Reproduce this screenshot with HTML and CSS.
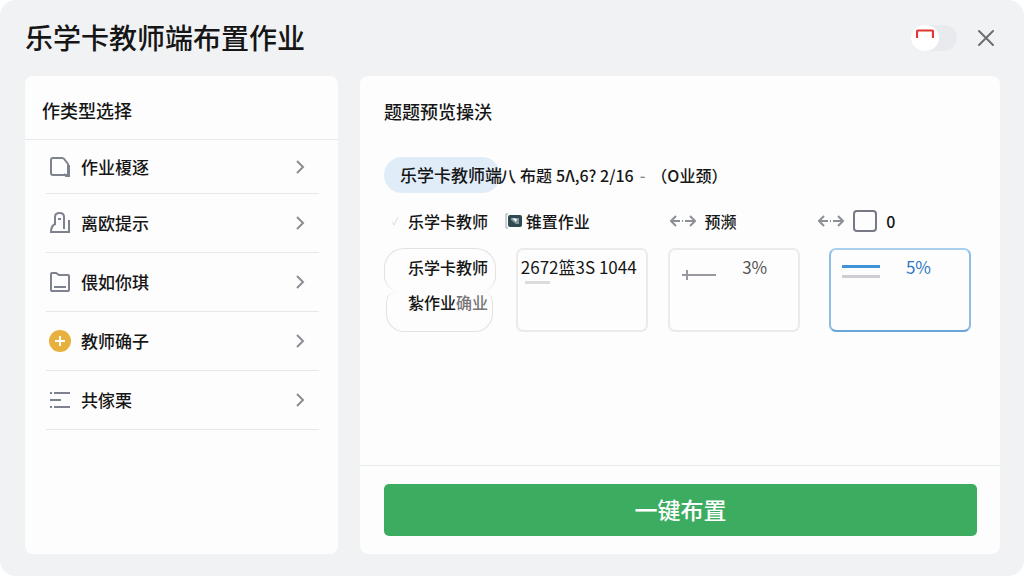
FILE: index.html
```html
<!DOCTYPE html>
<html lang="zh-CN">
<head>
  <meta charset="UTF-8">
  <meta name="viewport" content="width=device-width, initial-scale=1">
  <title>乐学卡教师端布置作业</title>
  <link rel="stylesheet" href="styles.css">
</head>
<body>
  <div class="window">
    <header class="topbar">
      <h1 class="title">乐学卡教师端布置作业</h1>
      <label class="switch">
        <input type="checkbox" aria-label="开关">
        <span class="knob">
          <svg width="18" height="10" viewBox="0 0 18 10"><path d="M1 9V2.5Q1 1.5 2 1.5H16Q17 1.5 17 2.5V9" fill="none" stroke="#e2362f" stroke-width="2.2"/></svg>
        </span>
      </label>
      <button class="close" aria-label="关闭">
        <svg width="18" height="18" viewBox="0 0 18 18"><path d="M2 2L16 16M16 2L2 16" stroke="#6b6e73" stroke-width="2" stroke-linecap="round"/></svg>
      </button>
    </header>

    <div class="content">
      <aside class="panel">
        <h2 class="side-heading">作类型选择</h2>
        <ul class="menu">
          <li>
            <button class="menu-item">
              <svg class="icon" viewBox="0 0 22 22"><path d="M4 2H13Q15 2 16 4L19 8V19H4Q2 19 2 17V4Q2 2 4 2ZM20 9V20H17L15 18"/></svg>
              <span>作业榎逐</span>
              <svg class="arrow" viewBox="0 0 10 16"><path d="M2 2L8 8L2 14"/></svg>
            </button>
          </li>
          <li>
            <button class="menu-item">
              <svg class="icon" viewBox="0 0 22 22"><path d="M6 13V5Q6 1 10.500 1Q15 1 15 5V17M6 12Q2 14 2 20H20V8M9 7H12"/></svg>
              <span>离欧提示</span>
              <svg class="arrow" viewBox="0 0 10 16"><path d="M2 2L8 8L2 14"/></svg>
            </button>
          </li>
          <li>
            <button class="menu-item">
              <svg class="icon" viewBox="0 0 22 22"><path d="M3 2H7L10 4H19Q20 4 20 5V19Q20 20 19 20H3Q2 20 2 19V3Q2 2 3 2ZM5 16H17"/></svg>
              <span>偎如你琪</span>
              <svg class="arrow" viewBox="0 0 10 16"><path d="M2 2L8 8L2 14"/></svg>
            </button>
          </li>
          <li>
            <button class="menu-item">
              <svg class="icon" viewBox="0 0 22 22"><circle class="coin" cx="11" cy="11" r="11"/><path class="plus" d="M11 6V16M6 11H16"/></svg>
              <span>教师确子</span>
              <svg class="arrow" viewBox="0 0 10 16"><path d="M2 2L8 8L2 14"/></svg>
            </button>
          </li>
          <li>
            <button class="menu-item">
              <svg class="icon" viewBox="0 0 22 22"><path d="M1 4H3M5 4H21M1 11H12M1 18H3M5 18H21"/></svg>
              <span>共傢栗</span>
              <svg class="arrow" viewBox="0 0 10 16"><path d="M2 2L8 8L2 14"/></svg>
            </button>
          </li>
        </ul>
      </aside>

      <main class="panel preview">
        <div class="preview-body">
          <h2 class="preview-heading">题题预览操浂</h2>

          <div class="summary">
            <span class="pill">乐学卡教师端</span>
            <span>八</span>
            <span>布题</span>
            <span>5Λ,6? 2/16</span>
            <span class="dash">-</span>
            <span>（O业颈）</span>
          </div>

          <div class="labels">
            <div class="label">
              <svg class="tick" width="8" height="10" viewBox="0 0 8 10"><path d="M1 6L3 9L7 1"/></svg>
              <span>乐学卡教师</span>
            </div>
            <div class="label photo-label">
              <svg width="17" height="16" viewBox="0 0 17 16"><path d="M3 1H1V15H3" fill="none" stroke="#9aa5a8"/><rect x="3" y="2" width="14" height="12" rx="2" fill="#2f4a50"/><path d="M6 5H14V11H11L6 7Z" fill="#7e979b"/><path d="M7 5L12 6L11 9Z" fill="#fff"/></svg>
              <span>锥置作业</span>
            </div>
            <div class="label">
              <svg class="swap" width="26" height="14" viewBox="0 0 26 14"><path d="M6 2L1 7L6 12M1 7H10M12 7H13M15 7H25M20 2L25 7L20 12"/></svg>
              <span>预濒</span>
            </div>
            <div class="label">
              <svg class="swap" width="26" height="14" viewBox="0 0 26 14"><path d="M6 2L1 7L6 12M1 7H10M12 7H13M15 7H25M20 2L25 7L20 12"/></svg>
              <input type="checkbox" class="check" id="zero">
              <label for="zero">0</label>
            </div>
          </div>

          <div class="cards">
            <div class="bubble">
              <span class="bubble-top">乐学卡教师</span>
              <span class="bubble-bottom">紮作业<span class="faded">确业</span></span>
            </div>
            <div class="card date-card">
              <span>2672篮3S 1044</span>
              <span class="stub"></span>
            </div>
            <div class="card rate-card">
              <svg width="36" height="14" viewBox="0 0 36 14"><path d="M1 8H35M6 3V13" fill="none" stroke="#96999f" stroke-width="2"/></svg>
              <span>3%</span>
            </div>
            <div class="card rate-card selected">
              <span class="bars"></span>
              <span>5%</span>
            </div>
          </div>
        </div>

        <footer class="actions">
          <button class="submit">一键布置</button>
        </footer>
      </main>
    </div>
  </div>
</body>
</html>
```
FILE: styles.css
```css
* {
  box-sizing: border-box;
}
body {
  margin: 0;
  background: #fff;
  color: #161616;
  font-family: "Noto Sans CJK SC", "Noto Sans", sans-serif;
  font-size: 17px;
  font-weight: 500;
  line-height: 24px;
}
h1, h2, ul {
  margin: 0;
  padding: 0;
}
button {
  font: inherit;
  color: inherit;
  border: none;
  background: none;
  padding: 0;
  cursor: pointer;
}
.window {
  display: flex;
  flex-direction: column;
  min-height: 100vh;
  padding: 0 24px 22px 25px;
  border-radius: 16px;
  background: #f1f2f4;
}

/* top bar */
.topbar {
  display: flex;
  align-items: center;
  height: 76px;
}
.title {
  flex: 1;
  padding-bottom: 2px;
  font-size: 28px;
  font-weight: 500;
  line-height: 40px;
}
.switch {
  position: relative;
  width: 46px;
  height: 26px;
  margin-right: 20px;
  border-radius: 13px;
  background: #e9eaed;
  cursor: pointer;
}
.switch input {
  position: absolute;
  opacity: 0;
}
.knob {
  display: flex;
  justify-content: center;
  width: 28px;
  height: 26px;
  padding-top: 4px;
  border-radius: 50%;
  background: #fff;
}
.close {
  display: flex;
  margin-right: 5px;
}

/* panels */
.content {
  display: grid;
  grid-template-columns: 313fr 640fr;
  gap: 22px;
  flex: 1;
}
.panel {
  border-radius: 8px;
  background: #fdfdfd;
}
.side-heading {
  padding: 22px 17px 17px;
  border-bottom: 1px solid #e8e9ea;
  font-size: 18px;
  font-weight: 500;
}
.menu {
  padding: 0 19px 0 21px;
  list-style: none;
}
.menu-item {
  display: flex;
  align-items: center;
  gap: 10px;
  width: 100%;
  height: 59px;
  padding: 0 14px 0 3px;
  border-bottom: 1px solid #e6e7e8;
  text-align: left;
}
.menu li:first-child .menu-item {
  height: 54px;
}
.menu-item span {
  flex: 1;
}
.icon {
  width: 22px;
  height: 22px;
  fill: none;
  stroke: #7d828e;
  stroke-width: 2;
}
.icon .coin {
  fill: #e8b03c;
  stroke: none;
}
.icon .plus {
  stroke: #fff;
}
.arrow {
  width: 10px;
  height: 16px;
  fill: none;
  stroke: #8b8e93;
  stroke-width: 2;
}

/* preview */
.preview {
  display: flex;
  flex-direction: column;
}
.preview-body {
  flex: 1;
  padding: 23px 23px 24px 24px;
}
.preview-heading {
  font-size: 18px;
  font-weight: 500;
}
.summary {
  display: flex;
  align-items: center;
  gap: 4px;
  margin-top: 34px;
  font-size: 16px;
  white-space: nowrap;
}
.pill {
  width: 116px;
  margin-right: -4px;
  padding: 6px 0 6px 16px;
  border-radius: 18px;
  background: #e0edf9;
  font-size: 17px;
}
.dash {
  padding: 0 2px;
  color: #888;
}
.labels {
  display: grid;
  grid-template-columns: 121fr 165fr 149fr 159fr;
  margin-top: 16px;
  font-size: 16px;
}
.label {
  display: flex;
  align-items: center;
  gap: 9px;
  white-space: nowrap;
}
.photo-label {
  gap: 4px;
}
.tick {
  margin-left: 7px;
  fill: none;
  stroke: #dcdcdc;
}
.swap {
  fill: none;
  stroke: #8d9095;
  stroke-width: 2;
}
.check {
  appearance: none;
  width: 24px;
  height: 22px;
  margin: 0;
  border: 2px solid #777986;
  border-radius: 4px;
}
.cards {
  display: grid;
  grid-template-columns: 112fr 132fr 133fr 157fr;
  gap: 20px;
  margin-top: 15px;
}
.card {
  height: 84px;
  border: 2px solid #ebebec;
  border-radius: 7px;
  white-space: nowrap;
}
.bubble {
  display: flex;
  flex-direction: column;
  font-size: 16px;
  white-space: nowrap;
}
.bubble-top {
  height: 44px;
  padding: 6px 0 0 23px;
  border: 1px solid #e2e2e2;
  border-bottom: none;
  border-radius: 20px 20px 16px 16px;
}
.bubble-bottom {
  height: 40px;
  margin: 0 3px 0 2px;
  padding: 0 0 0 21px;
  border: 1px solid #e2e2e2;
  border-top: none;
  border-radius: 10px 10px 18px 18px;
  line-height: 20px;
}
.faded {
  color: #777;
}
.date-card {
  padding: 5px 3px;
  font-weight: 400;
}
.stub {
  display: block;
  width: 25px;
  height: 3px;
  margin: 2px 0 0 4px;
  background: #dcdcde;
}
.rate-card {
  display: flex;
  justify-content: space-between;
  align-items: flex-start;
  padding: 5px 31px 0 11px;
  color: #555;
  font-weight: 400;
}
.rate-card svg {
  margin-top: 12px;
}
.selected {
  margin: 0 6px 0 9px;
  padding-right: 38px;
  border-color: #a9cfee #8fbce3 #6aa5da;
  color: #3079c2;
}
.bars {
  width: 38px;
  height: 13px;
  margin-top: 10px;
  border-top: 3px solid #3f93d8;
  border-bottom: 3px solid #ccced1;
}

/* footer */
.actions {
  padding: 18px 23px 18px 24px;
  border-top: 1px solid #e8e9e9;
}
.submit {
  width: 100%;
  height: 52px;
  padding-bottom: 2px;
  border-radius: 5px;
  background: #3cad60;
  color: #fff;
  font-size: 23px;
}
```
